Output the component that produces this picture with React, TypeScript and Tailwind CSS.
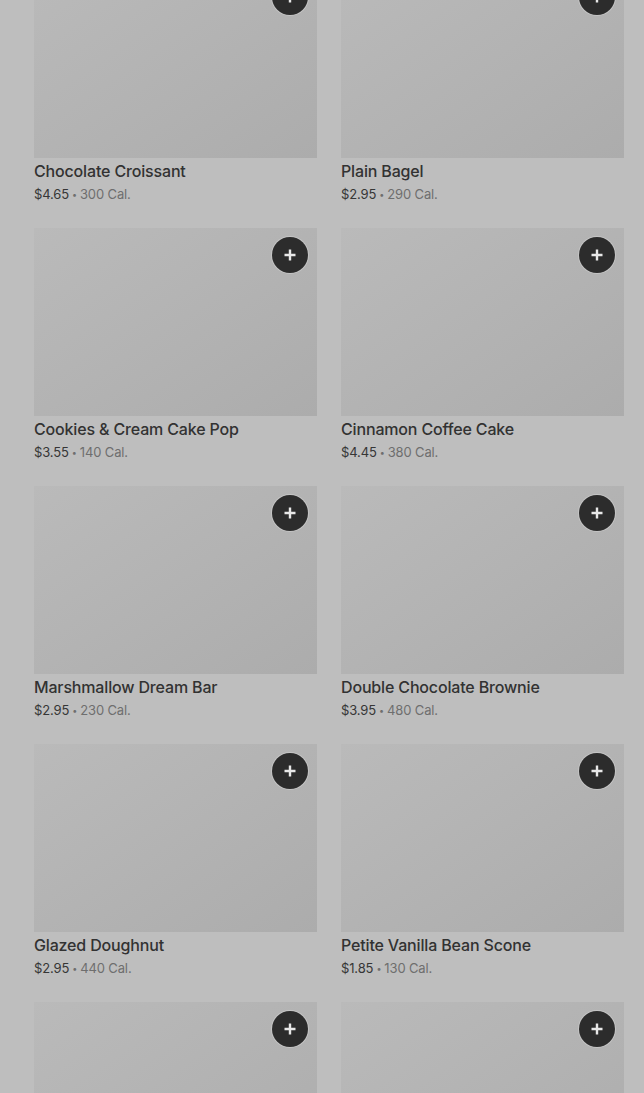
import React from "react";

type Item = { name: string; price: string; cal: number };

const items: Item[] = [
  { name: "Chocolate Croissant", price: "$4.65", cal: 300 },
  { name: "Plain Bagel", price: "$2.95", cal: 290 },
  { name: "Cookies & Cream Cake Pop", price: "$3.55", cal: 140 },
  { name: "Cinnamon Coffee Cake", price: "$4.45", cal: 380 },
  { name: "Marshmallow Dream Bar", price: "$2.95", cal: 230 },
  { name: "Double Chocolate Brownie", price: "$3.95", cal: 480 },
  { name: "Glazed Doughnut", price: "$2.95", cal: 440 },
  { name: "Petite Vanilla Bean Scone", price: "$1.85", cal: 130 },
];

function AddButton() {
  return (
    <button className="absolute top-[9px] right-[9px] w-9 h-9 rounded-full bg-[#2c2c2c] ring-1 ring-[#d0d0d0]/60 flex items-center justify-center">
      <svg width="14" height="14" viewBox="0 0 14 14" fill="none">
        <path d="M7 1.5v11M1.5 7h11" stroke="#e8e8e8" strokeWidth="2.4" />
      </svg>
    </button>
  );
}

function Photo() {
  return (
    <div className="relative h-[188px] bg-gradient-to-br from-[#bababa] to-[#acacac]">
      <AddButton />
    </div>
  );
}

function Card({ item }: { item: Item }) {
  return (
    <div>
      <Photo />
      <div className="mt-[3px] h-5 text-[16px] leading-5 font-medium tracking-[-0.01em] text-[#323232]">{item.name}</div>
      <div className="mt-[3px] h-5 flex items-center text-[13px] leading-5 tracking-[-0.01em] text-[#363636]">
        <span>{item.price}</span>
        <span className="text-[9px] leading-none mx-[3px] text-[#6e6e6e]">•</span>
        <span className="text-[#6e6e6e]">{item.cal} Cal.</span>
      </div>
    </div>
  );
}

export default function App() {
  return (
    <div className="h-[1093px] overflow-hidden bg-[#bebebe]" style={{ fontFamily: "Inter, 'Noto Sans', sans-serif" }}>
      <div className="grid grid-cols-[283px_283px] gap-x-6 gap-y-6 pl-[34px] mt-[-30px]">
        {items.map((it, i) => (
          <Card key={i} item={it} />
        ))}
        {/* next row, only photos are in view */}
        <Photo />
        <Photo />
      </div>
    </div>
  );
}
